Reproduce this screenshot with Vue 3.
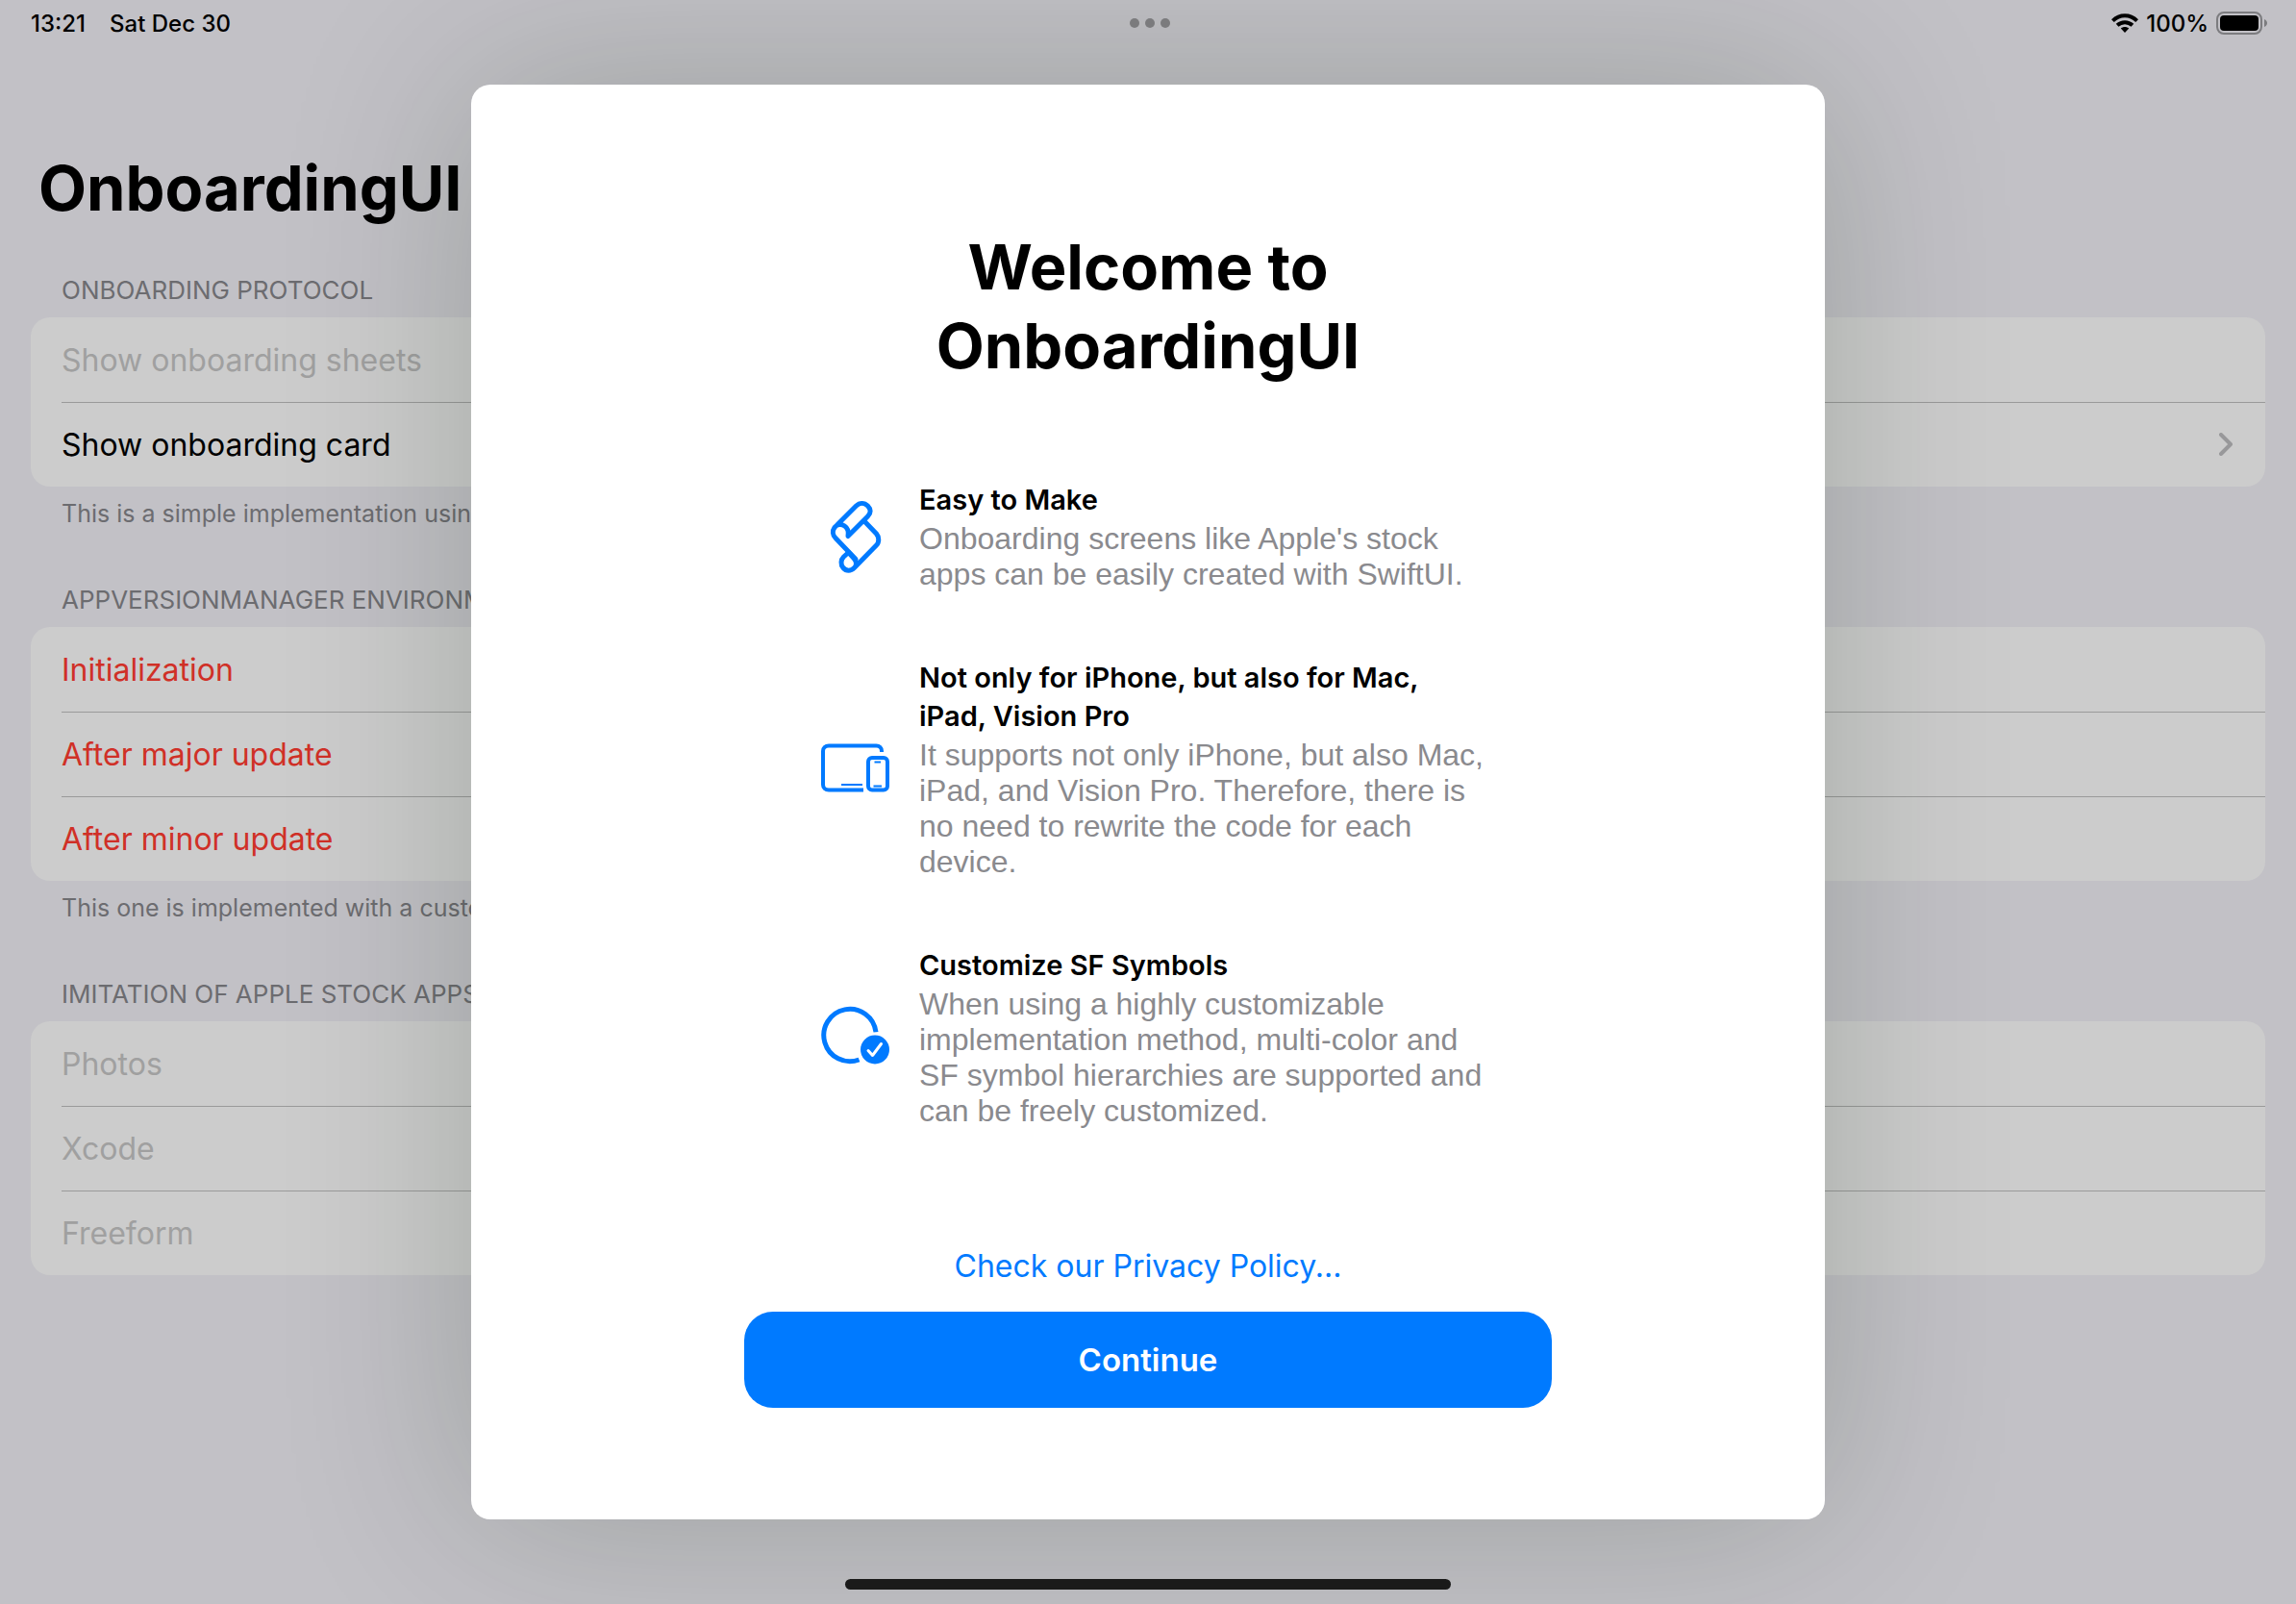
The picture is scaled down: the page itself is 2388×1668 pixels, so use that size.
<script setup>
const sections = [
  {
    title: 'Onboarding Protocol',
    rows: [
      { label: 'Show onboarding sheets', kind: 'disabled' },
      { label: 'Show onboarding card', kind: 'link' },
    ],
    footer: 'This is a simple implementation using sheets',
  },
  {
    title: 'AppVersionManager Environment',
    rows: [
      { label: 'Initialization', kind: 'danger' },
      { label: 'After major update', kind: 'danger' },
      { label: 'After minor update', kind: 'danger' },
    ],
    footer: 'This one is implemented with a custom view',
  },
  {
    title: 'Imitation of Apple Stock Apps',
    rows: [
      { label: 'Photos', kind: 'disabled' },
      { label: 'Xcode', kind: 'disabled' },
      { label: 'Freeform', kind: 'disabled' },
    ],
    footer: '',
  },
]

const features = [
  {
    icon: 'scroll',
    title: 'Easy to Make',
    text: "Onboarding screens like Apple's stock apps can be easily created with SwiftUI.",
  },
  {
    icon: 'devices',
    title: 'Not only for iPhone, but also for Mac, iPad, Vision Pro',
    text: 'It supports not only iPhone, but also Mac, iPad, and Vision Pro. Therefore, there is no need to rewrite the code for each device.',
  },
  {
    icon: 'badge',
    title: 'Customize SF Symbols',
    text: 'When using a highly customizable implementation method, multi-color and SF symbol hierarchies are supported and can be freely customized.',
  },
]
</script>

<template>
  <div class="screen">
    <header class="status">
      <div class="status-side">
        <time>13:21</time>
        <span>Sat Dec 30</span>
      </div>
      <button class="dots" type="button" aria-label="Multitasking">
        <i></i><i></i><i></i>
      </button>
      <div class="status-side status-right">
        <svg class="wifi" viewBox="0 0 28 20" aria-hidden="true">
          <g fill="none" stroke="#000" stroke-width="4">
            <path d="M1.4 7.6C8.6 .6 19.4 .6 26.6 7.6" />
            <path d="M6.1 12.3c4.6-4.2 11.2-4.2 15.8 0" />
          </g>
          <path d="M14 20l-4.2-4.4c2.4-2 6-2 8.4 0z" />
        </svg>
        <span>100%</span>
        <svg class="battery" viewBox="0 0 54 24" aria-hidden="true">
          <rect x="1" y="1" width="46" height="22" rx="7" fill="none" stroke="#7c7c7f" stroke-width="2" />
          <rect x="4" y="4" width="40" height="16" rx="4" />
          <path d="M50 8c4 1.400 4 6.600 0 8z" fill="#7c7c7f" />
        </svg>
      </div>
    </header>

    <main class="list">
      <h1 class="page-title">OnboardingUI</h1>
      <section v-for="s in sections" :key="s.title" class="group">
        <h2 class="group-title">{{ s.title }}</h2>
        <ul class="rows">
          <li v-for="r in s.rows" :key="r.label">
            <a v-if="r.kind === 'link'" class="row" href="#card">
              {{ r.label }}
              <svg class="chevron" viewBox="0 0 14 24" aria-hidden="true">
                <path d="M2 2l10 10L2 22" fill="none" stroke="#98989a" stroke-width="4" stroke-linecap="round" stroke-linejoin="round" />
              </svg>
            </a>
            <button v-else type="button" class="row" :class="r.kind" :disabled="r.kind === 'disabled'">
              {{ r.label }}
            </button>
          </li>
        </ul>
        <p v-if="s.footer" class="group-footer">{{ s.footer }}</p>
      </section>
    </main>

    <div class="overlay">
      <section class="sheet" role="dialog" aria-labelledby="welcome">
        <h2 id="welcome" class="welcome">Welcome to<br />OnboardingUI</h2>
        <ul class="features">
          <li v-for="f in features" :key="f.title" class="feature">
            <svg v-if="f.icon === 'scroll'" class="icon" viewBox="0 0 72 76" aria-hidden="true">
              <g fill="none" stroke="#007aff" stroke-width="5" stroke-linejoin="round" stroke-linecap="round">
                <path d="M17 25.500L36.500 6C40 2.500 45 2.500 48.500 6S52 13.500 48.500 17L28 37.500C29 32.500 27.500 29 24.500 27C21 24.500 16.500 25 14 28.500C11.500 32 12 36.500 15 39.500L36 61.500" />
                <path d="M45.500 22.500L57.500 35C60.500 38.500 60.500 44 57.500 47L34.500 70.500C31 74 26 74 23 70.500S20.500 62 23.500 59L28.500 54.500L34 60.500C37.500 64.500 37 68 34.500 70.500" />
              </g>
            </svg>
            <svg v-else-if="f.icon === 'devices'" class="icon" viewBox="0 0 72 76" aria-hidden="true">
              <g fill="none" stroke="#007aff" stroke-width="4">
                <path d="M63 20V19c0-3.500-2.500-5.500-5.500-5.500H8c-3.500 0-6 2-6 5.500v35c0 3.500 2.500 5.500 6 5.500h36" />
                <rect x="49" y="26" width="20" height="33.500" rx="4" />
                <path d="M21 54h22M55.500 30.500h6.500M54.500 55.500h8.500" stroke-width="2" />
              </g>
            </svg>
            <svg v-else class="icon" viewBox="0 0 72 76" aria-hidden="true">
              <path d="M57 32.300A27.200 27.200 0 1 0 39.500 61" fill="none" stroke="#007aff" stroke-width="5" />
              <circle cx="56" cy="50.500" r="15" fill="#007aff" />
              <path d="M49 51.500l4.500 5 9-12" fill="none" stroke="#fff" stroke-width="3" stroke-linecap="round" stroke-linejoin="round" />
            </svg>
            <div>
              <h3 class="feature-title">{{ f.title }}</h3>
              <p class="feature-text">{{ f.text }}</p>
            </div>
          </li>
        </ul>
        <footer class="actions">
          <a class="privacy" href="#privacy">Check our Privacy Policy...</a>
          <button class="continue" type="button">Continue</button>
        </footer>
      </section>
    </div>
    <div class="home"></div>
  </div>
</template>

<style>
body {
  margin: 0;
  background: #c2c1c6;
}
</style>

<style scoped>
.screen {
  position: relative;
  min-height: 100vh;
  overflow: hidden;
  box-sizing: border-box;
  background: #c2c1c6;
  color: #000;
  font-family: Inter, 'Liberation Sans', sans-serif;
}
h1,
h2,
h3,
p,
ul {
  margin: 0;
  padding: 0;
}
ul {
  list-style: none;
}
button {
  border: 0;
  padding: 0;
  background: none;
  font: inherit;
  color: inherit;
}
a {
  text-decoration: none;
}
svg {
  display: block;
  flex: none;
}
.status {
  position: relative;
  z-index: 2;
  display: flex;
  align-items: center;
  height: 48px;
  padding: 0 29px 0 32px;
  font-size: 24px;
  font-weight: 500;
}
.status-side {
  flex: 1;
  display: flex;
  align-items: center;
  gap: 25px;
}
.status-right {
  justify-content: flex-end;
  gap: 8px;
}
.wifi {
  width: 28px;
  height: 20px;
}
.battery {
  width: 54px;
  height: 24px;
}
.dots {
  display: flex;
  gap: 6px;
}
.dots i {
  width: 10px;
  height: 10px;
  border-radius: 50%;
  background: #7b7b7d;
}
.list {
  padding: 108px 32px 80px;
}
.page-title {
  padding-left: 8px;
  font-size: 65px;
  line-height: 80px;
  font-weight: 700;
}
.group {
  margin-top: 50px;
}
.group-title,
.group-footer {
  padding: 0 32px;
  font-size: 25px;
  line-height: 32px;
  font-weight: 400;
  color: #6c6c70;
}
.group-title {
  font-size: 26px;
  text-transform: uppercase;
  margin-bottom: 12px;
}
.group-footer {
  margin-top: 12px;
}
.group + .group {
  margin-top: 58px;
}
.rows {
  border-radius: 20px;
  background: #ccc;
}
.row {
  display: flex;
  align-items: center;
  justify-content: space-between;
  width: 100%;
  height: 88px;
  box-sizing: border-box;
  padding: 0 32px;
  font-size: 32px;
  color: #000;
}
.row.disabled {
  color: #a0a0a0;
}
.row.danger {
  color: #d03027;
}
li + li .row {
  background: linear-gradient(#9a9a9a, #9a9a9a) 32px 0 / 100% 1px no-repeat;
}
.chevron {
  width: 14px;
  height: 24px;
  margin-right: 2px;
}
.overlay {
  position: absolute;
  inset: 0;
  display: flex;
  justify-content: center;
  padding: 88px 0;
}
.sheet {
  display: flex;
  flex-direction: column;
  align-items: center;
  width: 59%;
  box-sizing: border-box;
  padding: 149px 24px 116px;
  border-radius: 20px;
  background: #fff;
  box-shadow: 0 0 200px rgba(0, 30, 0, 0.2);
}
.welcome {
  font-size: 65px;
  line-height: 82px;
  font-weight: 700;
  text-align: center;
}
.features {
  display: flex;
  flex-direction: column;
  gap: 69px;
  width: 708px;
  max-width: 100%;
  box-sizing: border-box;
  padding-left: 14px;
  margin-top: 99px;
}
.feature {
  display: flex;
  align-items: center;
  gap: 30px;
}
.icon {
  width: 72px;
  height: 76px;
}
.feature-title {
  font-size: 29px;
  line-height: 40px;
  font-weight: 600;
}
.feature-text {
  margin-top: 2px;
  font-family: 'Liberation Sans', Arial, sans-serif;
  font-size: 32px;
  line-height: 37px;
  color: #8a8a8e;
}
.actions {
  display: flex;
  flex-direction: column;
  align-items: center;
  gap: 27px;
  width: 840px;
  max-width: 100%;
  margin-top: auto;
}
.privacy {
  font-size: 32px;
  line-height: 40px;
  color: #007aff;
}
.continue {
  width: 100%;
  height: 100px;
  border-radius: 30px;
  background: #007aff;
  color: #fff;
  font-size: 33px;
  font-weight: 600;
}
.home {
  position: absolute;
  left: 50%;
  bottom: 15px;
  width: 630px;
  height: 11px;
  margin-left: -315px;
  border-radius: 6px;
  background: #1a1a1a;
}
</style>
